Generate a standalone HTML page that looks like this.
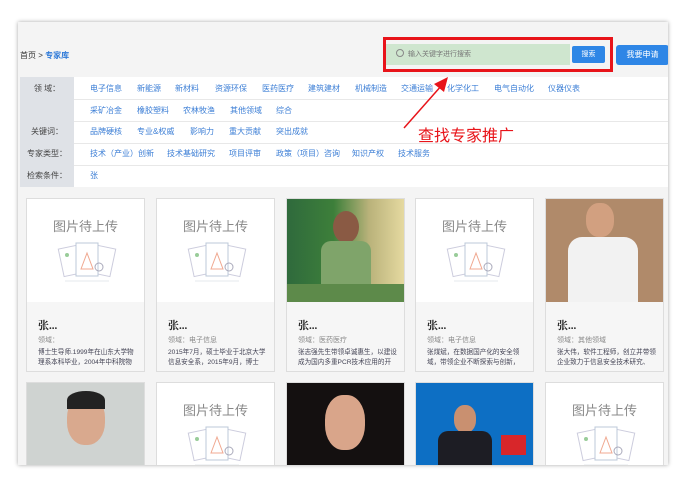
<!DOCTYPE html>
<html><head><meta charset="utf-8"><style>
*{margin:0;padding:0;box-sizing:border-box}
body{width:686px;height:485px;background:#fff;position:relative;overflow:hidden;font-family:"Liberation Sans","Noto Sans CJK SC",sans-serif;font-size:8px}
.frame{position:absolute;left:18px;top:22px;width:650px;height:443px;background:#f4f4f4;box-shadow:0 0 4px rgba(0,0,0,.35);overflow:hidden}
.a{position:absolute;white-space:nowrap}
.lk{color:#3d7fd6;font-size:8px}
.lab{color:#444;font-size:8px;left:2px;width:54px;text-align:center}
.card{position:absolute;width:119px;background:#fff;border:1px solid #ddd;overflow:hidden}
.info{position:absolute;left:0;right:0;top:103px;bottom:0;background:#f6f6f6}
.nm{position:absolute;left:11px;top:15px;font-size:11px;font-weight:bold;color:#222;font-family:"Liberation Serif","Noto Serif CJK SC",serif}
.fd{position:absolute;left:11px;top:33px;font-size:7px;color:#888}
.ds{position:absolute;left:11px;top:46px;width:100px;height:20px;overflow:hidden;font-size:6.6px;line-height:10px;color:#445}
.ph{position:absolute;left:0;top:0;width:100%;height:103px;background:#fff}
.pt{position:absolute;top:17px;width:100%;text-align:center;font-size:13px;color:#888}
.ic{position:absolute;left:30px;top:42px}
</style></head><body>
<svg width="0" height="0" style="position:absolute"><defs><g id="ic"><rect x="4" y="6" width="18" height="28" fill="#fff" stroke="#ccd" transform="rotate(-12 13 20)"/><rect x="38" y="6" width="18" height="28" fill="#fff" stroke="#ccd" transform="rotate(12 47 20)"/><rect x="19" y="2" width="22" height="33" fill="#fff" stroke="#bcc8d8"/><path d="M24 28 L30 12 L36 28 Z" fill="none" stroke="#f0a890"/><circle cx="42" cy="26" r="4" fill="none" stroke="#aab"/><circle cx="10" cy="14" r="2" fill="#9c9"/><line x1="8" y1="40" x2="52" y2="40" stroke="#e4e8ee"/></g></defs></svg>
<div class="frame">
 <div class="a" style="left:2px;top:28px;font-size:8px;color:#333">首页 &gt; <b style="color:#2f7ad8">专家库</b></div>
 <div class="a" style="left:368px;top:22px;width:184px;height:21px;background:#cfe6cf"></div>
 <div class="a" style="left:378px;top:27px;width:8px;height:8px;border:1px solid #888;border-radius:50%"></div>
 <div class="a" style="left:390px;top:27px;font-size:7px;color:#777">输入关键字进行搜索</div>
 <div class="a" style="left:554px;top:24px;width:33px;height:17px;background:#2e86e6;border-radius:2px;color:#fff;font-size:7px;text-align:center;line-height:17px">搜索</div>
 <div class="a" style="left:365px;top:15px;width:230px;height:35px;border:3px solid #e8141a"></div>
 <div class="a" style="left:598px;top:23px;width:53px;height:20px;background:#2e86e6;border-radius:3px;color:#fff;font-size:8px;text-align:center;line-height:20px">我要申请</div>
 <div class="a" style="left:2px;top:55px;width:648px;height:110px;background:#fff"></div>
 <div class="a" style="left:2px;top:55px;width:54px;height:110px;background:#dfe2e7"></div>
 <div class="a" style="left:56px;top:77px;width:594px;height:1px;background:#e8e8e8"></div>
 <div class="a" style="left:56px;top:99px;width:594px;height:1px;background:#e8e8e8"></div>
 <div class="a" style="left:56px;top:121px;width:594px;height:1px;background:#e8e8e8"></div>
 <div class="a" style="left:56px;top:143px;width:594px;height:1px;background:#e8e8e8"></div>
 <div class="a lab" style="top:61px">领 域：</div>
 <div class="a lab" style="top:104px">关键词：</div>
 <div class="a lab" style="top:126px">专家类型：</div>
 <div class="a lab" style="top:148px">检索条件：</div>
 <div class="a lk" style="left:72px;top:61px">电子信息</div><div class="a lk" style="left:119px;top:61px">新能源</div><div class="a lk" style="left:157px;top:61px">新材料</div><div class="a lk" style="left:197px;top:61px">资源环保</div><div class="a lk" style="left:244px;top:61px">医药医疗</div><div class="a lk" style="left:290px;top:61px">建筑建材</div><div class="a lk" style="left:337px;top:61px">机械制造</div><div class="a lk" style="left:383px;top:61px">交通运输</div><div class="a lk" style="left:429px;top:61px">化学化工</div><div class="a lk" style="left:476px;top:61px">电气自动化</div><div class="a lk" style="left:530px;top:61px">仪器仪表</div>
 <div class="a lk" style="left:72px;top:83px">采矿冶金</div><div class="a lk" style="left:119px;top:83px">橡胶塑料</div><div class="a lk" style="left:165px;top:83px">农林牧渔</div><div class="a lk" style="left:212px;top:83px">其他领域</div><div class="a lk" style="left:258px;top:83px">综合</div>
 <div class="a lk" style="left:72px;top:104px">品牌硬核</div><div class="a lk" style="left:119px;top:104px">专业&amp;权威</div><div class="a lk" style="left:172px;top:104px">影响力</div><div class="a lk" style="left:211px;top:104px">重大贡献</div><div class="a lk" style="left:258px;top:104px">突出成就</div>
 <div class="a lk" style="left:72px;top:126px">技术（产业）创新</div><div class="a lk" style="left:149px;top:126px">技术基础研究</div><div class="a lk" style="left:211px;top:126px">项目评审</div><div class="a lk" style="left:258px;top:126px">政策（项目）咨询</div><div class="a lk" style="left:334px;top:126px">知识产权</div><div class="a lk" style="left:380px;top:126px">技术服务</div>
 <div class="a lk" style="left:72px;top:148px">张</div>
 <div class="a" style="left:400px;top:100px;font-size:16px;color:#e8141a;font-family:'Noto Sans CJK SC',sans-serif">查找专家推广</div>
 <svg class="a" style="left:0;top:0" width="650" height="443"><line x1="386" y1="106" x2="424" y2="63" stroke="#e8141a" stroke-width="1.5"/><polygon points="430,55 416,62 426,70" fill="#e8141a"/></svg>

 <div class="card" style="left:8px;top:176px;height:174px"><div class="ph"><div class="pt">图片待上传</div><svg class="ic" width="60" height="45"><use href="#ic"/></svg></div><div class="info"><div class="nm">张...</div><div class="fd">领域：</div><div class="ds">博士生导师.1999年在山东大学物理系本科毕业，2004年中科院物理...</div></div></div>
 <div class="card" style="left:138px;top:176px;height:174px"><div class="ph"><div class="pt">图片待上传</div><svg class="ic" width="60" height="45"><use href="#ic"/></svg></div><div class="info"><div class="nm">张...</div><div class="fd">领域：电子信息</div><div class="ds">2015年7月，硕士毕业于北京大学信息安全系，2015年9月，博士深...</div></div></div>
 <div class="card" style="left:268px;top:176px;height:174px"><div class="ph" style="background:linear-gradient(90deg,#2f6a3c 0%,#3d7f3a 40%,#b9b27a 70%,#e5d9a0 100%)"><div style="position:absolute;left:46px;top:12px;width:26px;height:32px;border-radius:50%;background:#8a5a44"></div><div style="position:absolute;left:34px;top:42px;width:50px;height:50px;background:#7fa46a;border-radius:10px 10px 0 0"></div><div style="position:absolute;left:0;top:85px;width:100%;height:18px;background:#5d8a4a"></div></div><div class="info"><div class="nm">张...</div><div class="fd">领域：医药医疗</div><div class="ds">张志强先生带领卓诚惠生，以建设成为国内多重PCR技术应用的开拓...</div></div></div>
 <div class="card" style="left:397px;top:176px;height:174px"><div class="ph"><div class="pt">图片待上传</div><svg class="ic" width="60" height="45"><use href="#ic"/></svg></div><div class="info"><div class="nm">张...</div><div class="fd">领域：电子信息</div><div class="ds">张煤斌，在数据国产化的安全领域，带领企业不断探索与创新，在...</div></div></div>
 <div class="card" style="left:527px;top:176px;height:174px"><div class="ph" style="background:#b08a6a"><div style="position:absolute;left:40px;top:4px;width:28px;height:34px;border-radius:45%;background:#d2a080"></div><div style="position:absolute;left:22px;top:38px;width:70px;height:65px;background:#f2f2f2;border-radius:14px 14px 0 0"></div></div><div class="info"><div class="nm">张...</div><div class="fd">领域：其他领域</div><div class="ds">张大伟，软件工程师，创立并带领企业致力于信息安全技术研究、信...</div></div></div>

 <div class="card" style="left:8px;top:360px;height:90px"><div class="ph" style="background:#cfd3d1"><div style="position:absolute;left:40px;top:12px;width:38px;height:50px;border-radius:45%;background:#d9a98e"></div><div style="position:absolute;left:40px;top:8px;width:38px;height:18px;border-radius:50% 50% 0 0;background:#222"></div></div></div>
 <div class="card" style="left:138px;top:360px;height:90px"><div class="ph"><div class="pt">图片待上传</div><svg class="ic" width="60" height="45"><use href="#ic"/></svg></div></div>
 <div class="card" style="left:268px;top:360px;height:90px"><div class="ph" style="background:#141010"><div style="position:absolute;left:38px;top:12px;width:40px;height:55px;border-radius:45%;background:#d9a58a"></div></div></div>
 <div class="card" style="left:397px;top:360px;height:90px"><div class="ph" style="background:#0d6fc4"><div style="position:absolute;left:38px;top:22px;width:22px;height:28px;border-radius:45%;background:#c99070"></div><div style="position:absolute;left:22px;top:48px;width:54px;height:40px;background:#1d1d24;border-radius:10px 10px 0 0"></div><div style="position:absolute;left:85px;top:52px;width:25px;height:20px;background:#d8262a"></div></div></div>
 <div class="card" style="left:527px;top:360px;height:90px"><div class="ph"><div class="pt">图片待上传</div><svg class="ic" width="60" height="45"><use href="#ic"/></svg></div></div>
</div>
</body></html>
